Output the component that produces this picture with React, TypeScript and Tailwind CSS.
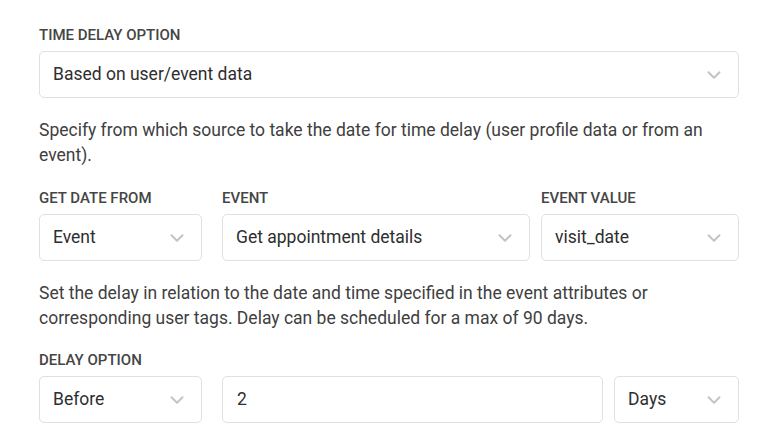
import { ChevronDown } from "lucide-react";

function Label({ children }: { children: React.ReactNode }) {
  return (
    <div className="mb-[6px] text-[15px] leading-[20px] font-medium uppercase text-[#454545]">
      {children}
    </div>
  );
}

function Select({ value }: { value: string }) {
  return (
    <div className="flex h-[47px] items-center justify-between rounded-[5px] border border-[#e0e0e0] bg-white pl-[13px] pr-[13px] text-[17.5px] text-[#2e2e2e]">
      <span>{value}</span>
      <ChevronDown size={22} strokeWidth={2.2} className="text-[#c4c4c4]" />
    </div>
  );
}

function Input({ value }: { value: string }) {
  return (
    <div className="flex h-[47px] items-center rounded-[5px] border border-[#e0e0e0] bg-white pl-[14px] text-[17.5px] text-[#2e2e2e]">
      {value}
    </div>
  );
}

export default function App() {
  return (
    <div className="min-h-screen bg-white pl-[39px] pr-[30px] pt-[25px] font-['Roboto',sans-serif]">
      <div className="w-[700px]">
        <Label>Time delay option</Label>
        <Select value="Based on user/event data" />

        <p className="mt-[20px] text-[17.5px] leading-[25px] text-[#404040]">
          Specify from which source to take the date for time delay (user profile data or from an
          event).
        </p>

        <div className="mt-[20px] flex">
          <div className="w-[163px]">
            <Label>Get date from</Label>
            <Select value="Event" />
          </div>
          <div className="ml-[20px] w-[308px]">
            <Label>Event</Label>
            <Select value="Get appointment details" />
          </div>
          <div className="ml-[11px] w-[198px] flex-1">
            <Label>Event value</Label>
            <Select value="visit_date" />
          </div>
        </div>

        <p className="mt-[20px] text-[17.5px] leading-[25px] text-[#404040]">
          Set the delay in relation to the date and time specified in the event attributes or
          corresponding user tags. Delay can be scheduled for a max of 90 days.
        </p>

        <div className="mt-[19px]">
          <Label>Delay option</Label>
          <div className="flex">
            <div className="w-[163px]">
              <Select value="Before" />
            </div>
            <div className="ml-[20px] w-[381px]">
              <Input value="2" />
            </div>
            <div className="ml-[11px] flex-1">
              <Select value="Days" />
            </div>
          </div>
        </div>
      </div>
    </div>
  );
}
